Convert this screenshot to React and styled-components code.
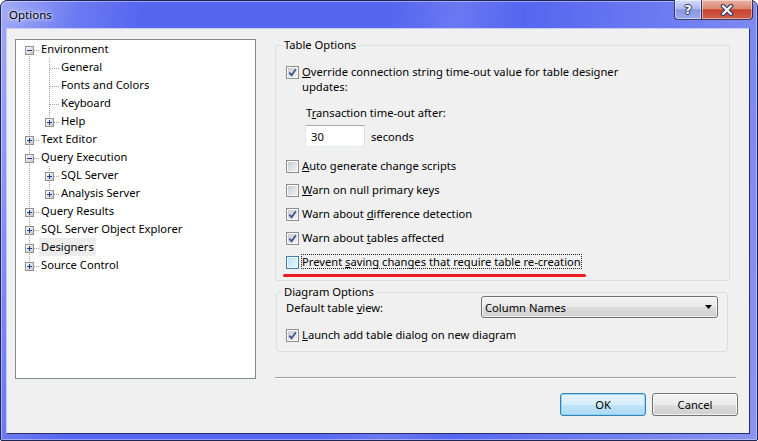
import React from 'react'
import styled, { createGlobalStyle } from 'styled-components'

const GlobalStyle = createGlobalStyle`
  html, body { margin: 0; padding: 0; }
  body {
    width: 758px;
    height: 441px;
    overflow: hidden;
    background: #fff;
    font-family: "Noto Sans", "Open Sans", sans-serif;
    font-size: 11.2px;
    color: #000;
  }
`

const Window = styled.div`
  box-sizing: border-box;
  width: 758px;
  height: 441px;
  display: flex;
  flex-direction: column;
  padding: 0 7px 6px 5px;
  border: 1px solid #1f2653;
  border-radius: 7px 7px 2px 2px;
  box-shadow: inset 0 0 0 1px rgba(255, 255, 255, 0.4);
  background:
    linear-gradient(100deg, rgba(255,255,255,0.45) 0%, rgba(255,255,255,0.14) 9%, rgba(255,255,255,0) 17%,
      rgba(255,255,255,0) 47%, rgba(255,255,255,0.12) 55%, rgba(255,255,255,0) 63%, rgba(255,255,255,0.3) 100%),
    #5666ef;
`

const TitleBar = styled.div`
  height: 27px;
  flex: none;
  display: flex;
  align-items: flex-start;
`

const Title = styled.div`
  margin: 6px 0 0 3px;
  line-height: 16px;
  font-size: 11.5px;
  text-shadow: 0 0 6px #fff, 0 0 3px rgba(255, 255, 255, 0.9);
`

const CaptionButtons = styled.div`
  margin: -1px -3px 0 auto;
  display: flex;
`

const CaptionButton = styled.div`
  box-sizing: border-box;
  width: ${p => (p.$close ? 51 : 28)}px;
  height: 20px;
  display: flex;
  align-items: center;
  justify-content: center;
  border: 1px solid rgba(22, 28, 70, 0.8);
  border-top: none;
  ${p => (p.$close ? 'border-left: none;' : '')}
  border-radius: ${p => (p.$close ? '0 0 4px 0' : '0 0 0 4px')};
  background: ${p =>
    p.$close
      ? 'linear-gradient(#ebb1a4 0%, #dc8774 45%, #c8432f 52%, #d0604c 100%)'
      : 'linear-gradient(#d5dcf8 0%, #aeb9ef 45%, #8796e3 52%, #9caaea 100%)'};
  box-shadow: inset 0 0 0 1px rgba(255, 255, 255, 0.45);
  color: #fff;
  font: bold 13px "DejaVu Sans", sans-serif;
  text-shadow: 1px 0 0 #26305c, -1px 0 0 #26305c, 0 1px 0 #26305c, 0 -1px 0 #26305c;
`

const Client = styled.div`
  flex: 1;
  box-sizing: border-box;
  display: flex;
  flex-direction: column;
  padding: 8px 11px 17px 8px;
  background: #f0f0f0;
  border: 1px solid;
  border-color: #c4cbf4 #27306b #27306b #c4cbf4;
`

const Main = styled.div`
  display: flex;
  align-items: stretch;
`

const Tree = styled.div`
  box-sizing: border-box;
  width: 241px;
  height: 340px;
  margin-top: 2px;
  padding-left: 3px;
  background: #fff;
  border: 1px solid #828790;
`

const TreeRow = styled.div`
  display: flex;
  height: 18px;
  align-items: center;
`

const TreeLabel = styled.span`
  padding: 0 2px;
  line-height: 18px;
  margin-top: -1px;
  white-space: nowrap;
  background: ${p => (p.$selected ? '#ececec' : 'transparent')};
`

const RightPane = styled.div`
  flex: 1;
  display: flex;
  flex-direction: column;
  margin: 0 2px 0 19px;
`

const Group = styled.fieldset`
  margin: ${p => p.$margin};
  padding: ${p => p.$padding};
  min-width: 0;
  border: 1px solid #d5dfe5;
  border-radius: 3px;
  display: flex;
  flex-direction: column;
  align-items: flex-start;
`

const Legend = styled.legend`
  padding: 0 2px;
  margin-left: -4px;
  line-height: 16px;
`

const CheckRow = styled.div`
  display: flex;
  align-items: flex-start;
  gap: 3px;
  margin-top: ${p => p.$mt || 0}px;
`

const Box = styled.span`
  box-sizing: border-box;
  flex: none;
  width: 13px;
  height: 13px;
  margin-top: 1px;
  display: flex;
  align-items: center;
  justify-content: center;
  border: 1px solid ${p => (p.$hover ? '#3c7fb1' : '#8e8f8f')};
  padding: 1px;
  background: ${p =>
    p.$hover
      ? 'linear-gradient(135deg, #b9e1f6 0%, #e6f7fd 100%) content-box, #f4fbfe'
      : 'linear-gradient(135deg, #c9cdd3 0%, #f2f2f2 100%) content-box, #f7f7f7'};
`

const Label = styled.span`
  line-height: 15px;
  margin-top: -1px;
  white-space: nowrap;
`

const FocusLabel = styled.span`
  line-height: 13px;
  margin: -1px 0 0 -1px;
  border: 1px dotted #222;
  white-space: nowrap;
`

const SubLabel = styled.div`
  margin: 11px 0 0 20px;
  line-height: 15px;
`

const InputRow = styled.div`
  display: flex;
  align-items: center;
  gap: 6px;
  margin: 5px 0 0 19px;
`

const TextInput = styled.div`
  box-sizing: border-box;
  width: 60px;
  height: 22px;
  padding-left: 5px;
  display: flex;
  align-items: center;
  background: #fff;
  border: 1px solid;
  border-color: #abadb3 #dbdfe6 #e3e9ef #e2e3ea;
`

const RedMark = styled.div`
  width: 303px;
  height: 3px;
  margin: 5px 0 0 -3px;
  border-radius: 2px;
  background: #ec1c24;
`

const ViewRow = styled.div`
  align-self: stretch;
  display: flex;
  align-items: center;
  justify-content: space-between;
  margin-top: -4px;
`

const Combo = styled.div`
  box-sizing: border-box;
  width: 237px;
  height: 22px;
  padding: 0 5px 0 3px;
  display: flex;
  align-items: center;
  justify-content: space-between;
  border: 1px solid #707070;
  border-radius: 3px;
  background: linear-gradient(#f2f2f2 0%, #ebebeb 50%, #dddddd 50%, #cfcfcf 100%);
  box-shadow: inset 0 0 0 1px rgba(255, 255, 255, 0.7);
`

const Separator = styled.div`
  margin-top: auto;
  border-top: 1px solid #a0a0a0;
  border-bottom: 1px solid #fff;
`

const Footer = styled.div`
  display: flex;
  justify-content: flex-end;
  gap: 6px;
  margin-top: 14px;
`

const Button = styled.div`
  box-sizing: border-box;
  width: 86px;
  height: 23px;
  display: flex;
  align-items: center;
  justify-content: center;
  border: 1px solid ${p => (p.$default ? '#3c7fb1' : '#707070')};
  border-radius: 3px;
  background: ${p =>
    p.$default
      ? 'linear-gradient(#e5f4fc 0%, #d6eefb 50%, #c0e4f8 50%, #afdaf4 100%)'
      : 'linear-gradient(#f2f2f2 0%, #ebebeb 50%, #dddddd 50%, #cfcfcf 100%)'};
  box-shadow: inset 0 0 0 1px ${p => (p.$default ? 'rgba(120, 210, 250, 0.8)' : 'rgba(255, 255, 255, 0.75)')};
`

const TREE = [
  {
    label: 'Environment',
    children: [
      { label: 'General' },
      { label: 'Fonts and Colors' },
      { label: 'Keyboard' },
      { label: 'Help', collapsed: true },
    ],
  },
  { label: 'Text Editor', collapsed: true },
  {
    label: 'Query Execution',
    children: [
      { label: 'SQL Server', collapsed: true },
      { label: 'Analysis Server', collapsed: true },
    ],
  },
  { label: 'Query Results', collapsed: true },
  { label: 'SQL Server Object Explorer', collapsed: true },
  { label: 'Designers', collapsed: true, selected: true },
  { label: 'Source Control', collapsed: true },
]

function flatten(nodes, depth = 0, trail = [], out = []) {
  nodes.forEach((node, i) => {
    const last = i === nodes.length - 1
    out.push({ ...node, depth, trail, first: depth === 0 && i === 0, last })
    if (node.children) flatten(node.children, depth + 1, [...trail, !last], out)
  })
  return out
}

const DOT = { stroke: '#a0a0a0', strokeWidth: 1, strokeDasharray: '1 1' }

function Connector({ id, pass, own, first, last, expander }) {
  return (
    <svg width="20" height="18" viewBox="0 0 20 18" style={{ flex: 'none' }}>
      {pass && <line x1="10.5" y1="0" x2="10.5" y2="18" {...DOT} />}
      {own && (
        <>
          <line x1="10.5" y1={first ? 10 : 0} x2="10.5" y2={last ? 10 : 18} {...DOT} />
          <line x1="11" y1="10.5" x2="20" y2="10.5" {...DOT} />
        </>
      )}
      {expander && (
        <>
          <defs>
            <linearGradient id={id} x1="0" y1="0" x2="1" y2="1">
              <stop offset="0" stopColor="#ffffff" />
              <stop offset="1" stopColor="#c6c6c6" />
            </linearGradient>
          </defs>
          <rect x="6.5" y="6.5" width="8" height="8" fill={`url(#${id})`} stroke="#919191" />
          <line x1="8" y1="10.5" x2="13" y2="10.5" stroke="#1f3f8f" />
          {expander === 'plus' && <line x1="10.5" y1="8" x2="10.5" y2="13" stroke="#1f3f8f" />}
        </>
      )}
    </svg>
  )
}

function TreeView() {
  const rows = flatten(TREE)
  return (
    <Tree>
      {rows.map((row, i) => (
        <TreeRow key={i}>
          {row.trail.map((hasNext, j) => (
            <Connector key={j} pass={hasNext} />
          ))}
          <Connector
            id={`tg${i}`}
            own
            first={row.first}
            last={row.last}
            expander={row.children ? 'minus' : row.collapsed ? 'plus' : null}
          />
          <TreeLabel $selected={row.selected}>{row.label}</TreeLabel>
        </TreeRow>
      ))}
    </Tree>
  )
}

function Checkbox({ checked, hover }) {
  return (
    <Box $hover={hover}>
      {checked && (
        <svg width="9" height="9" viewBox="0 0 9 9">
          <path d="M1.2 4.6 L3.6 7.2 L7.8 1.2" fill="none" stroke="#40558f" strokeWidth="1.8" />
        </svg>
      )}
    </Box>
  )
}

function CloseGlyph() {
  return (
    <svg width="14" height="12" viewBox="0 0 14 12">
      <path d="M3 2 L11 10 M11 2 L3 10" stroke="#26305c" strokeWidth="4.4" strokeLinecap="round" />
      <path d="M3 2 L11 10 M11 2 L3 10" stroke="#fff" strokeWidth="2.4" strokeLinecap="round" />
    </svg>
  )
}

export default function App() {
  return (
    <>
      <GlobalStyle />
      <Window>
        <TitleBar>
          <Title>Options</Title>
          <CaptionButtons>
            <CaptionButton>?</CaptionButton>
            <CaptionButton $close>
              <CloseGlyph />
            </CaptionButton>
          </CaptionButtons>
        </TitleBar>
        <Client>
          <Main>
            <TreeView />
            <RightPane>
              <Group $margin="0 6px 0 0" $padding="0 10px 3px 10px">
                <Legend>Table Options</Legend>
                <CheckRow $mt={12}>
                  <Checkbox checked />
                  <Label>
                    <u>O</u>verride connection string time-out value for table designer
                    <br />
                    updates:
                  </Label>
                </CheckRow>
                <SubLabel>
                  T<u>r</u>ansaction time-out after:
                </SubLabel>
                <InputRow>
                  <TextInput>30</TextInput>
                  <span>seconds</span>
                </InputRow>
                <CheckRow $mt={12}>
                  <Checkbox />
                  <Label>
                    <u>A</u>uto generate change scripts
                  </Label>
                </CheckRow>
                <CheckRow $mt={10}>
                  <Checkbox />
                  <Label>
                    <u>W</u>arn on null primary keys
                  </Label>
                </CheckRow>
                <CheckRow $mt={10}>
                  <Checkbox checked />
                  <Label>
                    Warn about <u>d</u>ifference detection
                  </Label>
                </CheckRow>
                <CheckRow $mt={10}>
                  <Checkbox checked />
                  <Label>
                    Warn about <u>t</u>ables affected
                  </Label>
                </CheckRow>
                <CheckRow $mt={10}>
                  <Checkbox hover />
                  <FocusLabel>
                    Prevent <u>s</u>aving changes that require table re-creation
                  </FocusLabel>
                </CheckRow>
                <RedMark />
              </Group>
              <Group $margin="3px 8px 0 1px" $padding="0 9px 9px 9px">
                <Legend>Diagram Options</Legend>
                <ViewRow>
                  <span>
                    Default table <u>v</u>iew:
                  </span>
                  <Combo>
                    <span>Column Names</span>
                    <svg width="7" height="4" viewBox="0 0 7 4">
                      <path d="M0 0 H7 L3.5 4 Z" fill="#000" />
                    </svg>
                  </Combo>
                </ViewRow>
                <CheckRow $mt={10}>
                  <Checkbox checked />
                  <Label>
                    <u>L</u>aunch add table dialog on new diagram
                  </Label>
                </CheckRow>
              </Group>
              <Separator />
            </RightPane>
          </Main>
          <Footer>
            <Button $default>OK</Button>
            <Button>Cancel</Button>
          </Footer>
        </Client>
      </Window>
    </>
  )
}
